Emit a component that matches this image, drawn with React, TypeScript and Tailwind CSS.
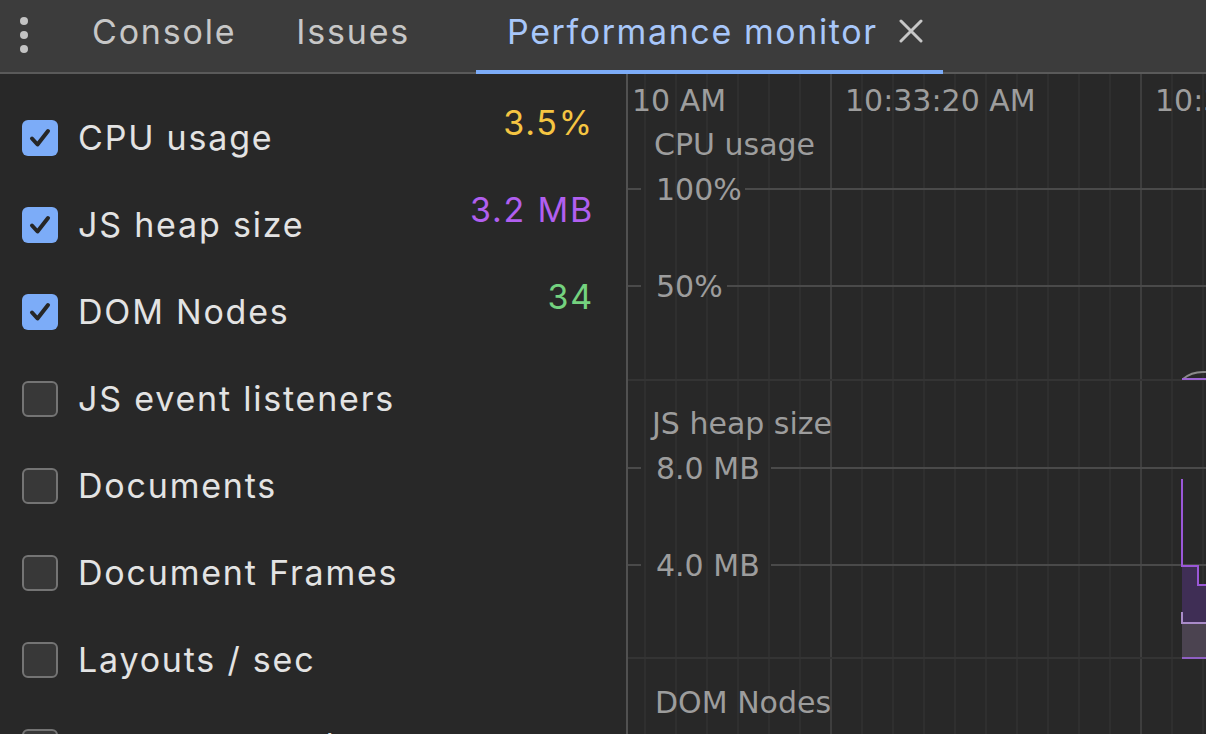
import React from 'react';

type Metric = { label: string; checked: boolean; value?: string; color?: string };

const metrics: Metric[] = [
  { label: 'CPU usage', checked: true, value: '3.5%', color: 'text-[#f5c542]' },
  { label: 'JS heap size', checked: true, value: '3.2 MB', color: 'text-[#b15ff0]' },
  { label: 'DOM Nodes', checked: true, value: '34', color: 'text-[#74d27f]' },
  { label: 'JS event listeners', checked: false },
  { label: 'Documents', checked: false },
  { label: 'Document Frames', checked: false },
  { label: 'Layouts / sec', checked: false },
  { label: 'Style recalcs / sec', checked: false },
];

const Checkbox: React.FC<{ checked: boolean }> = ({ checked }) =>
  checked ? (
    <div className="w-[36px] h-[36px] rounded-[6px] bg-[#7cacf8] flex items-center justify-center shrink-0">
      <svg width="26" height="26" viewBox="0 0 26 26">
        <path d="M5 13.5 L10.5 19.5 L21 6" fill="none" stroke="#262626" strokeWidth="4" strokeLinecap="round" strokeLinejoin="round" />
      </svg>
    </div>
  ) : (
    <div className="w-[36px] h-[36px] rounded-[6px] border-2 border-[#747474] bg-[#383838] shrink-0" />
  );

// chart area origin is (628, 74) in page coords
const X0 = 628;
const Y0 = 74;
const minorXs = [645, 676, 707, 738, 769, 800, 862, 893, 924, 955, 986, 1017, 1048, 1079, 1110, 1172, 1203];
const majorXs = [831, 1141];

const Chart: React.FC = () => {
  const tx = (x: number) => x - X0;
  const ty = (y: number) => y - Y0;
  return (
    <svg width="578" height="660" className="block font-['DejaVu_Sans',sans-serif] tracking-normal" fontSize="30">
      {minorXs.map((x) => (
        <line key={x} x1={tx(x)} x2={tx(x)} y1={0} y2={660} stroke="#2f2f2f" strokeWidth="2" />
      ))}
      {majorXs.map((x) => (
        <line key={x} x1={tx(x)} x2={tx(x)} y1={0} y2={660} stroke="#3e3e3e" strokeWidth="2" />
      ))}

      {/* chart separators */}
      <line x1={0} x2={578} y1={ty(380)} y2={ty(380)} stroke="#343434" strokeWidth="2" />
      <line x1={0} x2={578} y1={ty(658)} y2={ty(658)} stroke="#343434" strokeWidth="2" />

      {/* scale lines with tick + gap for label */}
      {[
        { y: 189, from: 745 },
        { y: 286, from: 727 },
        { y: 468, from: 771 },
        { y: 565, from: 771 },
      ].map((l) => (
        <g key={l.y} stroke="#4a4a4a" strokeWidth="2">
          <line x1={0} x2={tx(641)} y1={ty(l.y)} y2={ty(l.y)} />
          <line x1={tx(l.from)} x2={578} y1={ty(l.y)} y2={ty(l.y)} />
        </g>
      ))}

      <g fill="#9d9d9d" dominantBaseline="central">
        <text x={tx(632)} y={ty(100)}>10 AM</text>
        <text x={tx(845)} y={ty(100)}>10:33:20 AM</text>
        <text x={tx(1155)} y={ty(100)}>10:33:30 AM</text>

        <text x={tx(654)} y={ty(144)}>CPU usage</text>
        <text x={tx(656)} y={ty(189)}>100%</text>
        <text x={tx(656)} y={ty(286)}>50%</text>

        <text x={tx(652)} y={ty(423)}>JS heap size</text>
        <text x={tx(656)} y={ty(468)}>8.0 MB</text>
        <text x={tx(656)} y={ty(565)}>4.0 MB</text>

        <text x={tx(655)} y={ty(702)}>DOM Nodes</text>
      </g>

      {/* cpu trace */}
      <path d={`M${tx(1183)} ${ty(379)} Q${tx(1192)} ${ty(371)} ${tx(1206)} ${ty(372)}`} fill="none" stroke="#8a8a8a" strokeWidth="2" />
      <line x1={tx(1182)} x2={578} y1={ty(379)} y2={ty(379)} stroke="#9b63d2" strokeWidth="2" />

      {/* heap trace */}
      <path
        d={`M${tx(1182)} ${ty(566)} H${tx(1198)} V${ty(585)} H578 V${ty(623)} H${tx(1182)} Z`}
        fill="#3f2e55"
      />
      <rect x={tx(1182)} y={ty(623)} width={578 - tx(1182)} height={35} fill="#4b4350" />
      <path
        d={`M${tx(1182)} ${ty(479)} V${ty(566)} H${tx(1198)} V${ty(585)} H578`}
        fill="none"
        stroke="#9a57d8"
        strokeWidth="2"
      />
      <path d={`M${tx(1182)} ${ty(612)} V${ty(623)} H578`} fill="none" stroke="#a98bc8" strokeWidth="2" />
      <line x1={tx(1182)} x2={578} y1={ty(658)} y2={ty(658)} stroke="#8f5fc4" strokeWidth="2" />
    </svg>
  );
};

export default function App() {
  return (
    <div className="w-[1206px] h-[734px] overflow-hidden bg-[#282828] flex flex-col font-['Inter',sans-serif] tracking-[1.8px]">
      {/* Tab bar */}
      <div className="h-[74px] shrink-0 bg-[#3c3c3c] border-b-2 border-[#5a5a5a] flex items-stretch">
        <div className="w-[48px] flex flex-col items-center justify-center gap-[6px] pb-[2px]">
          <span className="w-[8px] h-[8px] rounded-full bg-[#c4c4c4]" />
          <span className="w-[8px] h-[8px] rounded-full bg-[#c4c4c4]" />
          <span className="w-[8px] h-[8px] rounded-full bg-[#c4c4c4]" />
        </div>
        <div className="flex items-center pl-[44px] pr-[60px] text-[34px] text-[#c7c7c7] pb-[10px]">Console</div>
        <div className="flex items-center pr-[66px] text-[34px] text-[#c7c7c7] pb-[10px]">Issues</div>
        <div className="flex items-center pl-[31px] pr-[20px] gap-[21px] text-[34px] tracking-[1.6px] text-[#a8c7fa] pb-[8px] mb-[-2px] border-b-4 border-[#7cacf8]">
          <span>Performance monitor</span>
          <svg width="24" height="24" viewBox="0 0 24 24">
            <path d="M2 2 L22 22 M22 2 L2 22" stroke="#c7c7c7" strokeWidth="3" strokeLinecap="round" />
          </svg>
        </div>
      </div>

      {/* Body */}
      <div className="flex flex-1 min-h-0">
        <div className="w-[626px] shrink-0 pt-[20px] pl-[22px] pr-[32px]">
          {metrics.map((m) => (
            <div key={m.label} className="h-[87px] flex items-center">
              <Checkbox checked={m.checked} />
              <span className="ml-[20px] text-[34px] text-[#e3e3e3] whitespace-nowrap">{m.label}</span>
              {m.value && <span className={`ml-auto mb-[30px] text-[34px] ${m.color}`}>{m.value}</span>}
            </div>
          ))}
        </div>
        <div className="flex-1 border-l-2 border-[#515151] overflow-hidden">
          <Chart />
        </div>
      </div>
    </div>
  );
}
